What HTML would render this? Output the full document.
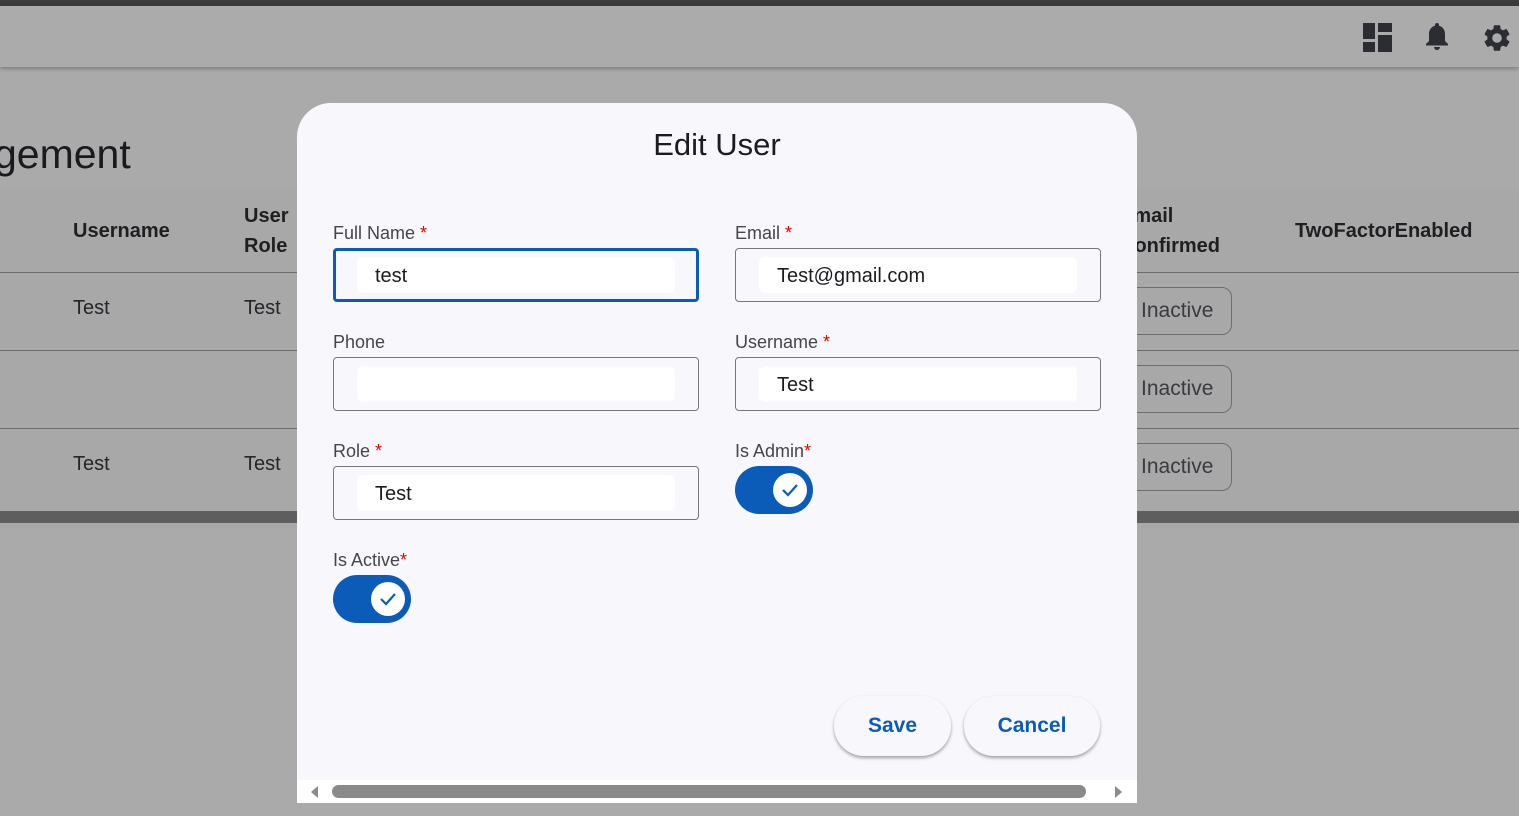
<!DOCTYPE html>
<html><head><style>
*{box-sizing:border-box;margin:0;padding:0}
body{width:1519px;height:816px;overflow:hidden;background:#aaaaab;font-family:"Liberation Sans",sans-serif;position:relative;color:#1c1b1f}
.abs{position:absolute}
.top{left:0;top:0;width:1519px;height:6px;background:#3c3c3e}
.hdr{left:0;top:6px;width:1519px;height:61px;background:#ababab;box-shadow:0 2px 4px rgba(0,0,0,.25)}
.table{left:0;top:188px;width:1519px;height:340px;background:#a8a8a9}
.line{left:0;width:1519px;height:1px;background:#6c6c6c}
.th{font-size:20px;font-weight:bold;color:#1f1f22;line-height:30px}
.td{font-size:20px;color:#25252a}
.chip{left:1100px;width:132px;height:48px;border:1px solid #6e6e6e;border-radius:10px;font-size:21px;color:#3a3a40;padding:11px 0 0 40px}
.modal{left:297px;top:103px;width:840px;height:700px;background:#f8f8fc;border-radius:34px 34px 0 0}
.lbl{font-size:18px;color:#45454a}
.lbl b{color:#e00;font-weight:normal}
.inp{width:366px;height:54px;border:1px solid #77767c;border-radius:4px}
.inp.f{border:3px solid #0b5cb8}
.inner{position:absolute;left:23px;top:8px;width:318px;height:36px;background:#fff;border-radius:6px;font-size:20px;padding:8px 0 0 18px;color:#1c1b1f}
.inp.f .inner{left:21px;top:6px}
.tog{width:78px;height:48px;border-radius:24px;background:#0b5cb8}
.tog i{position:absolute;right:6px;top:7px;width:34px;height:34px;border-radius:50%;background:#fff}
.btn{height:60px;border-radius:30px;background:#f8f8fc;box-shadow:0 2px 3px rgba(0,0,0,.35);color:#0b5cb8;font-size:21px;font-weight:bold;text-align:center;line-height:60px}
</style></head><body>
<div class="abs top"></div>
<div class="abs hdr"></div>
<svg class="abs" style="left:1363px;top:23px" width="29" height="29" viewBox="0 0 29 29"><rect x="0" y="0" width="12" height="16" fill="#2c2c33"/><rect x="15" y="0" width="14" height="9" fill="#2c2c33"/><rect x="0" y="19" width="12" height="10" fill="#2c2c33"/><rect x="15" y="12" width="14" height="17" fill="#2c2c33"/></svg>
<svg class="abs" style="left:1424px;top:22px" width="26" height="30" viewBox="0 0 26 30"><path d="M13 1c1.2 0 2 .8 2 2v.7c3.8 1 6 4.2 6 8.3v7l3 3v1.5H2V22l3-3v-7c0-4.1 2.2-7.3 6-8.3V3c0-1.2.8-2 2-2z" fill="#2c2c33"/><path d="M10 25h6a3 3 0 0 1-6 0z" fill="#2c2c33"/></svg>
<svg class="abs" style="left:1481px;top:22px" width="32" height="32" viewBox="0 0 24 24"><path fill="#2c2c33" d="M19.14 12.94c.04-.3.06-.61.06-.94s-.02-.64-.07-.94l2.03-1.58a.5.5 0 0 0 .12-.61l-1.920-3.32a.5.5 0 0 0-.59-.22l-2.39.96c-.5-.38-1.03-.7-1.62-.94l-.36-2.540a.5.5 0 0 0-.48-.41h-3.84a.5.5 0 0 0-.47.41l-.36 2.54c-.59.24-1.13.57-1.62.94l-2.39-.96a.5.5 0 0 0-.59.22L2.74 8.87a.5.5 0 0 0 .12.61l2.03 1.58c-.05.3-.09.63-.09.94s.02.64.07.94l-2.03 1.58a.5.5 0 0 0-.12.61l1.92 3.32c.12.22.37.29.59.22l2.39-.96c.5.38 1.03.7 1.62.94l.36 2.54c.05.24.24.41.48.41h3.84c.24 0 .44-.17.47-.41l.36-2.54c.59-.24 1.13-.56 1.62-.94l2.39.96c.22.08.47 0 .59-.22l1.92-3.32a.5.5 0 0 0-.12-.61l-2.01-1.58zM12 15.6A3.6 3.6 0 1 1 12 8.4a3.6 3.6 0 0 1 0 7.2z"/></svg>
<div class="abs" style="left:-6px;top:131px;font-size:41px;color:#1a1a1e">gement</div>
<div class="abs table"></div>
<div class="abs line" style="top:272px"></div>
<div class="abs line" style="top:350px"></div>
<div class="abs line" style="top:428px"></div>
<div class="abs" style="left:0;top:511px;width:1519px;height:12px;background:#5e5e5e"></div>
<div class="abs th" style="left:73px;top:216px">Username</div>
<div class="abs th" style="left:244px;top:201px">User<br>Role</div>
<div class="abs th" style="left:1120px;top:201px">Email<br>Confirmed</div>
<div class="abs th" style="left:1295px;top:216px">TwoFactorEnabled</div>
<div class="abs td" style="left:73px;top:297px">Test</div><div class="abs td" style="left:244px;top:297px">Test</div>
<div class="abs td" style="left:73px;top:453px">Test</div><div class="abs td" style="left:244px;top:453px">Test</div>
<div class="abs chip" style="top:287px">Inactive</div>
<div class="abs chip" style="top:365px">Inactive</div>
<div class="abs chip" style="top:443px">Inactive</div>

<div class="abs modal"></div>
<div class="abs" style="left:297px;top:780px;width:840px;height:23px;background:#fff"></div>
<div class="abs" style="left:332px;top:785px;width:754px;height:13px;border-radius:7px;background:#8a8a8a"></div>
<svg class="abs" style="left:308px;top:785px" width="12" height="14"><path d="M10 1L3 7l7 6z" fill="#8a8a8a"/></svg>
<svg class="abs" style="left:1113px;top:785px" width="12" height="14"><path d="M2 1l7 6-7 6z" fill="#8a8a8a"/></svg>
<div class="abs" style="left:297px;top:127px;width:840px;text-align:center;font-size:31px;color:#1c1b1f">Edit User</div>

<div class="abs lbl" style="left:333px;top:223px">Full Name <b>*</b></div>
<div class="abs inp f" style="left:333px;top:248px"><div class="inner">test</div></div>
<div class="abs lbl" style="left:735px;top:223px">Email <b>*</b></div>
<div class="abs inp" style="left:735px;top:248px"><div class="inner">Test@gmail.com</div></div>
<div class="abs lbl" style="left:333px;top:332px">Phone</div>
<div class="abs inp" style="left:333px;top:357px"><div class="inner"></div></div>
<div class="abs lbl" style="left:735px;top:332px">Username <b>*</b></div>
<div class="abs inp" style="left:735px;top:357px"><div class="inner">Test</div></div>
<div class="abs lbl" style="left:333px;top:441px">Role <b>*</b></div>
<div class="abs inp" style="left:333px;top:466px"><div class="inner">Test</div></div>
<div class="abs lbl" style="left:735px;top:441px">Is Admin<b>*</b></div>
<div class="abs tog" style="left:735px;top:466px"><i><svg width="34" height="34"><path d="M10 17l5 5 9-10" stroke="#0b5cb8" stroke-width="2.2" fill="none"/></svg></i></div>
<div class="abs lbl" style="left:333px;top:550px">Is Active<b>*</b></div>
<div class="abs tog" style="left:333px;top:575px"><i><svg width="34" height="34"><path d="M10 17l5 5 9-10" stroke="#0b5cb8" stroke-width="2.2" fill="none"/></svg></i></div>

<div class="abs btn" style="left:834px;top:696px;width:117px">Save</div>
<div class="abs btn" style="left:964px;top:696px;width:136px">Cancel</div>
</body></html>
